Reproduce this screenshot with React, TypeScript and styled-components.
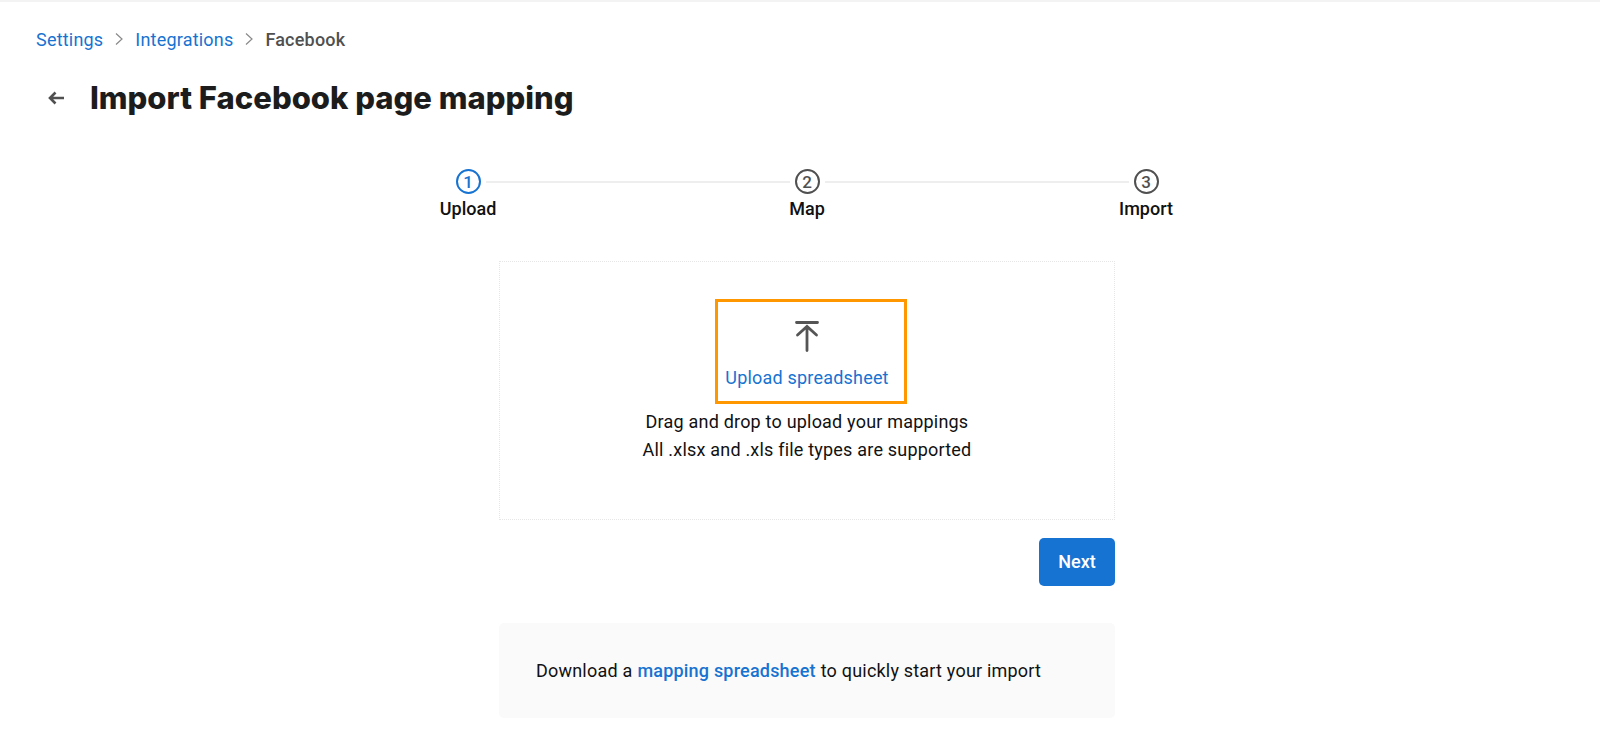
import React from "react";
import styled, { createGlobalStyle } from "styled-components";

const GlobalStyle = createGlobalStyle`
  html, body {
    margin: 0;
    padding: 0;
    background: #fff;
    font-family: Roboto, "Liberation Sans", sans-serif;
  }
  * {
    box-sizing: border-box;
  }
`;

const Page = styled.div`
  height: 753px;
  padding: 0 22px 0 36px;
  border-top: 2px solid #f3f3f3;
  overflow: hidden;
`;

const Breadcrumbs = styled.nav`
  display: flex;
  align-items: center;
  height: 22px;
  margin-top: 26px;
  font-size: 18px;
  letter-spacing: 0.2px;
`;

const Crumb = styled.a`
  color: #1773d1;
  text-decoration: none;
`;

const CurrentCrumb = styled.span`
  color: #505050;
  font-weight: 500;
`;

const Chevron = styled.svg`
  width: 10px;
  height: 14px;
  margin: 0 11px 0 11px;
  fill: none;
  stroke: #8a8a8a;
  stroke-width: 1.2;
`;

const TitleRow = styled.div`
  display: flex;
  align-items: center;
  margin-top: 26px;
  height: 44px;
`;

const BackArrow = styled.svg`
  width: 16px;
  height: 14px;
  margin: 0 26px 0 12px;
  fill: none;
  stroke: #505050;
  stroke-width: 2.6;
`;

const Title = styled.h1`
  margin: 0;
  font-family: Inter, "Liberation Sans", sans-serif;
  font-size: 31px;
  line-height: 44px;
  font-weight: 800;
  color: #1c1c1c;
`;

const Main = styled.main`
  display: flex;
  flex-direction: column;
  align-items: center;
`;

const Stepper = styled.div`
  width: 703px;
  margin-top: 49px;
`;

const Rail = styled.div`
  display: flex;
  align-items: center;
  gap: 5px;
`;

const StepCircle = styled.div<{ $active?: boolean }>`
  flex: none;
  display: flex;
  align-items: center;
  justify-content: center;
  width: 25px;
  height: 25px;
  border-radius: 50%;
  border: 2px solid ${(p) => (p.$active ? "#1773d1" : "#505050")};
  color: ${(p) => (p.$active ? "#1773d1" : "#505050")};
  font-size: 17px;
  font-weight: 500;
`;

const Connector = styled.div`
  flex: 1;
  height: 2px;
  background: #eeeeee;
`;

const StepLabels = styled.div`
  display: grid;
  grid-template-columns: repeat(3, 25px);
  justify-content: space-between;
  margin-top: 4px;
`;

const StepLabel = styled.div`
  display: flex;
  justify-content: center;
  font-size: 18px;
  line-height: 22px;
  font-weight: 500;
  color: #111;
  white-space: nowrap;
`;

const DropZone = styled.section`
  display: flex;
  flex-direction: column;
  align-items: center;
  width: 616px;
  height: 259px;
  margin-top: 41px;
  padding-top: 37px;
  border: 1px dotted #e6e6e6;
`;

const UploadBox = styled.div`
  display: flex;
  flex-direction: column;
  align-items: center;
  width: 192px;
  height: 105px;
  margin-left: 8px;
  padding: 18px 8px 0 0;
  border: 3px solid #ff9800;
`;

const UploadIcon = styled.svg`
  width: 26px;
  height: 32px;
  fill: none;
  stroke: #555;
  stroke-width: 2.8;
  stroke-linecap: round;
`;

const UploadLink = styled.a`
  margin-top: 14px;
  font-size: 18px;
  line-height: 24px;
  letter-spacing: 0.2px;
  white-space: nowrap;
  color: #1773d1;
`;

const Hint = styled.p`
  margin: 4px 0 0;
  font-size: 18px;
  line-height: 28px;
  letter-spacing: 0.2px;
  text-align: center;
  color: #111;
`;

const Actions = styled.div`
  display: flex;
  justify-content: flex-end;
  width: 616px;
  margin-top: 18px;
`;

const NextButton = styled.button`
  width: 76px;
  height: 48px;
  padding: 0 0 2px;
  border: 0;
  border-radius: 5px;
  background: #1773d1;
  color: #fff;
  font-family: inherit;
  font-size: 18px;
  font-weight: 500;
`;

const DownloadPanel = styled.section`
  display: flex;
  align-items: center;
  width: 616px;
  height: 95px;
  margin-top: 37px;
  padding-left: 37px;
  border-radius: 5px;
  background: #fafafa;
  font-size: 18px;
  letter-spacing: 0.2px;
  color: #111;
`;

const DownloadLink = styled.a`
  margin: 0 5px;
  font-weight: 500;
  color: #1773d1;
`;

export default function App() {
  return (
    <Page>
      <GlobalStyle />
      <Breadcrumbs>
        <Crumb>Settings</Crumb>
        <Chevron viewBox="0 0 10 14">
          <path d="M2 1.5 8 7l-6 5.5" />
        </Chevron>
        <Crumb>Integrations</Crumb>
        <Chevron viewBox="0 0 10 14">
          <path d="M2 1.5 8 7l-6 5.5" />
        </Chevron>
        <CurrentCrumb>Facebook</CurrentCrumb>
      </Breadcrumbs>
      <TitleRow>
        <BackArrow viewBox="0 0 16 14">
          <path d="M16 7H2M7.5 1.5 2 7l5.5 5.5" />
        </BackArrow>
        <Title>Import Facebook page mapping</Title>
      </TitleRow>
      <Main>
        <Stepper>
          <Rail>
            <StepCircle $active>1</StepCircle>
            <Connector />
            <StepCircle>2</StepCircle>
            <Connector />
            <StepCircle>3</StepCircle>
          </Rail>
          <StepLabels>
            <StepLabel>Upload</StepLabel>
            <StepLabel>Map</StepLabel>
            <StepLabel>Import</StepLabel>
          </StepLabels>
        </Stepper>
        <DropZone>
          <UploadBox>
            <UploadIcon viewBox="0 0 26 32">
              <path d="M2.5 2.5h21M13 6.5v24M3.5 15 13 6.5 22.5 15" />
            </UploadIcon>
            <UploadLink>Upload spreadsheet</UploadLink>
          </UploadBox>
          <Hint>
            Drag and drop to upload your mappings
            <br />
            All .xlsx and .xls file types are supported
          </Hint>
        </DropZone>
        <Actions>
          <NextButton>Next</NextButton>
        </Actions>
        <DownloadPanel>
          Download a<DownloadLink>mapping spreadsheet</DownloadLink>to quickly start your import
        </DownloadPanel>
      </Main>
    </Page>
  );
}
